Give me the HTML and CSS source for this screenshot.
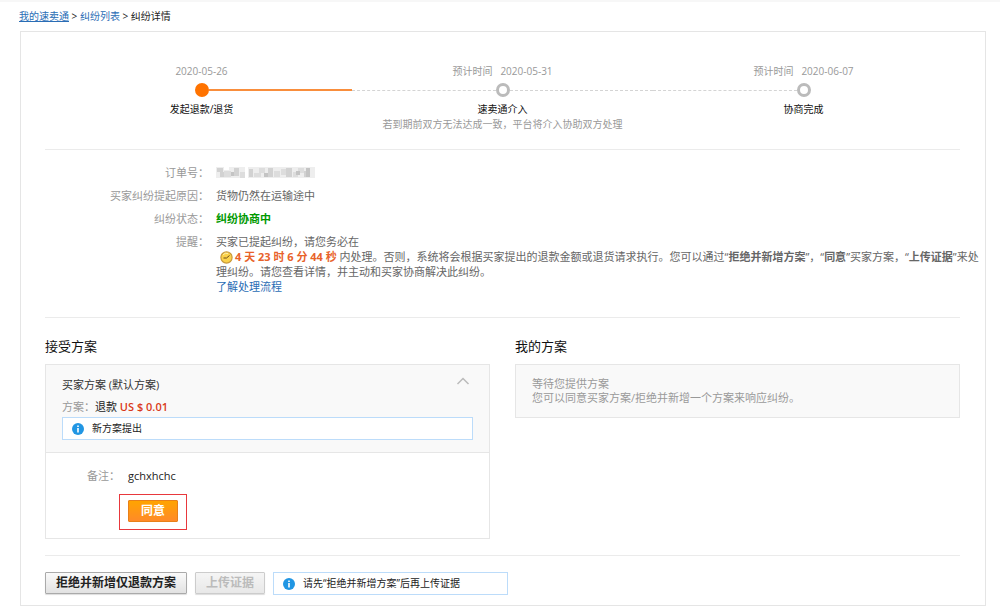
FILE: index.html
```html
<!DOCTYPE html>
<html lang="zh-CN">
<head>
<meta charset="utf-8">
<title>纠纷详情</title>
<link rel="stylesheet" href="styles.css">
</head>
<body>
<nav class="breadcrumb"><a href="#">我的速卖通</a> &gt; <a class="plain" href="#">纠纷列表</a> &gt; <span>纠纷详情</span></nav>
<main class="panel">
  <ol class="steps">
    <li class="step">
      <span class="date">2020-05-26</span>
      <div class="track"><i class="seg none"></i><i class="dot active"></i><i class="seg done"></i></div>
      <span class="name">发起退款/退货</span>
    </li>
    <li class="step">
      <span class="date"><span>预计时间</span><span>2020-05-31</span></span>
      <div class="track"><i class="seg"></i><i class="dot"></i><i class="seg"></i></div>
      <span class="name">速卖通介入</span>
      <span class="note">若到期前双方无法达成一致，平台将介入协助双方处理</span>
    </li>
    <li class="step">
      <span class="date"><span>预计时间</span><span>2020-06-07</span></span>
      <div class="track"><i class="seg"></i><i class="dot"></i><i class="seg none"></i></div>
      <span class="name">协商完成</span>
    </li>
  </ol>

  <dl class="details">
    <dt>订单号：</dt>
    <dd>
      <svg class="mask" width="100" height="12" viewBox="0 0 100 12" shape-rendering="crispEdges" aria-hidden="true">
        <path fill="#eee" d="M0 1h99v11H0z"/>
        <path fill="#d2d2d2" d="M1 2h6v4H1zM4 6h4v5H4zM18 2h5v8h-5zM33 3h4v8h-4zM52 2h5v9h-5zM70 2h6v9h-6zM88 5h4v6h-4z"/>
        <path fill="#ddd" d="M8 5h7v6H8zM24 6h5v6h-5zM38 7h7v4h-7zM43 2h6v5h-6zM58 5h6v6h-6zM65 3h5v6h-5zM77 6h5v5h-5zM82 2h6v5h-6z"/>
        <path fill="#c4c4c4" d="M15 6h3v4h-3zM48 7h4v4h-4zM80 5h4v4h-4zM90 2h4v9h-4z"/>
        <path fill="#fff" d="M29 0h3v12h-3zM8 1h5v3H8z"/>
      </svg>
    </dd>
    <dt>买家纠纷提起原因：</dt>
    <dd>货物仍然在运输途中</dd>
    <dt>纠纷状态：</dt>
    <dd><strong class="status">纠纷协商中</strong></dd>
    <dt>提醒：</dt>
    <dd>
      买家已提起纠纷，请您务必在<br>
      <svg class="clock" width="13" height="13" viewBox="0 0 13 13" aria-hidden="true"><circle cx="6.5" cy="6.5" r="5.6" fill="#fbd24b" stroke="#c99a3c" stroke-width="1.2"/><path d="M3 3.8a4.3 4.3 0 0 1 5-1.2" fill="none" stroke="#fff0a8"/><path d="M3.5 7h3l3-2.500" fill="none" stroke="#6b4a1a"/></svg><strong class="timer">4 天 23 时 6 分 44 秒</strong> 内处理。否则，系统将会根据买家提出的退款金额或退货请求执行。您可以通过“<strong>拒绝并新增方案</strong>”，“<strong>同意</strong>”买家方案，“<strong>上传证据</strong>”来处<br>理纠纷。请您查看详情，并主动和买家协商解决此纠纷。<br>
      <a class="plain" href="#">了解处理流程</a>
    </dd>
  </dl>

  <div class="plans">
    <section class="plan">
      <h2>接受方案</h2>
      <div class="card">
        <div class="card-head">
          <div class="row">
            <span>买家方案 (默认方案)</span>
            <button class="collapse" type="button" aria-label="收起"><svg width="14" height="8" viewBox="0 0 14 8"><path d="M1.500 7 7 1.500 12.500 7" fill="none" stroke="#bbb" stroke-width="1.500"/></svg></button>
          </div>
          <p class="offer"><span class="muted">方案：</span>退款 <strong class="price">US $ 0.01</strong></p>
          <div class="info"><svg width="12" height="12" viewBox="0 0 12 12" aria-hidden="true"><circle cx="6" cy="6" r="6" fill="#2196e3"/><path d="M5.200 2.500h1.600v1.500H5.200zM5.200 5h1.600v4.500H5.200z" fill="#fff"/></svg>新方案提出</div>
        </div>
        <div class="card-body">
          <p class="remark"><span class="muted">备注：</span><span>gchxhchc</span></p>
          <div class="highlight"><button class="btn primary" type="button">同意</button></div>
        </div>
      </div>
    </section>
    <section class="plan">
      <h2>我的方案</h2>
      <div class="card waiting">
        <p>等待您提供方案</p>
        <p>您可以同意买家方案/拒绝并新增一个方案来响应纠纷。</p>
      </div>
    </section>
  </div>

  <footer class="actions">
    <button class="btn" type="button">拒绝并新增仅退款方案</button>
    <button class="btn" type="button" disabled>上传证据</button>
    <div class="info hint"><svg width="12" height="12" viewBox="0 0 12 12" aria-hidden="true"><circle cx="6" cy="6" r="6" fill="#2196e3"/><path d="M5.200 2.500h1.600v1.500H5.200zM5.200 5h1.600v4.500H5.200z" fill="#fff"/></svg>请先“拒绝并新增方案”后再上传证据</div>
  </footer>
</main>
</body>
</html>
```
FILE: styles.css
```css
* { box-sizing: border-box; }
body {
  margin: 0;
  border-top: 2px solid #f7f7f7;
  background: #fff;
  color: #222;
  font: 11px/15px "Open Sans", "Noto Sans CJK SC", sans-serif;
}
p, h2, ol, dl, dd { margin: 0; padding: 0; }
a { color: #2a6db5; text-decoration: underline; }
a.plain { text-decoration: none; }
button { font-family: inherit; }

.breadcrumb { padding: 7px 19px; font-size: 10px; }

.panel {
  margin: 0 14px 0 20px;
  padding: 32px 25px 10px 24px;
  border: 1px solid #e5e5e5;
}

.steps {
  display: grid;
  grid-template-columns: repeat(3, 1fr);
  padding: 0 6px 17px;
  border-bottom: 1px solid #ebebeb;
  list-style: none;
  font-size: 10px;
}
.step { display: flex; flex-direction: column; align-items: center; }
.date { display: flex; gap: 8px; color: #999; }
.track { display: flex; align-items: center; align-self: stretch; height: 14px; margin: 4px 0 5px; }
.seg { flex: 1; border-top: 1px dashed #d4d4d4; }
.seg.done { border-top: 2px solid #f98e3c; }
.seg.none { border-color: transparent; }
.dot { width: 14px; height: 14px; border: 3px solid #bbb; border-radius: 50%; }
.dot.active { border-color: #ff7300; background: #ff7300; }
.name { color: #111; }
.note { color: #999; }

.details {
  display: grid;
  grid-template-columns: 164px 1fr;
  gap: 8px 7px;
  padding: 15px 0 23px;
  border-bottom: 1px solid #ebebeb;
}
.details dt { color: #999; text-align: right; }
.details dd { color: #666; white-space: nowrap; }
.mask { display: block; margin-top: 1px; }
.status { color: #090; }
.clock { margin: 0 2px 0 4px; vertical-align: -3px; }
.timer { color: #e8622a; }

.plans { display: grid; grid-template-columns: 1fr 1fr; gap: 25px; padding: 18px 0 16px; }
.plan h2 { margin-bottom: 8px; font-size: 13px; font-weight: 400; line-height: 20px; color: #111; }
.card { border: 1px solid #e6e6e6; }
.card-head { padding: 12px 16px; border-bottom: 1px solid #e6e6e6; background: #f9f9f9; color: #333; }
.row { display: flex; justify-content: space-between; align-items: flex-start; }
.collapse { display: flex; padding: 0 3px; border: 0; background: none; }
.muted { color: #999; }
.offer { margin: 7px 0 3px; color: #222; }
.price { color: #d9391a; font-weight: 600; }
.info {
  display: flex;
  align-items: center;
  gap: 8px;
  height: 23px;
  padding: 0 9px;
  border: 1px solid #bcdcfa;
  background: #fff;
  color: #222;
  font-size: 10px;
}
.card-body { padding: 15px 16px 8px 73px; }
.remark { display: flex; gap: 8px; margin: 0 0 11px -32px; }
.highlight { display: inline-flex; padding: 5px 8px 7px; border: 1px solid #e8383d; }
.waiting { padding: 12px 16px; background: #f9f9f9; color: #999; line-height: 14px; }

.actions { display: flex; gap: 8px; padding-top: 16px; border-top: 1px solid #ebebeb; }
.btn {
  height: 22px;
  padding: 0 10px;
  border: 1px solid #aaa;
  border-radius: 1px;
  background: linear-gradient(#fafafa, #e2e2e2);
  box-shadow: 0 1px 1px #ddd;
  color: #222;
  font-size: 12px;
  font-weight: 700;
  line-height: 18px;
}
.btn:disabled { border-color: #ccc; background: linear-gradient(#f5f5f5, #e8e8e8); color: #bbb; }
.btn.primary { padding: 0 12px; border-color: #e8801a; background: linear-gradient(#ffa400, #ff8a28); box-shadow: none; color: #fff; }
.hint { width: 235px; }
```
